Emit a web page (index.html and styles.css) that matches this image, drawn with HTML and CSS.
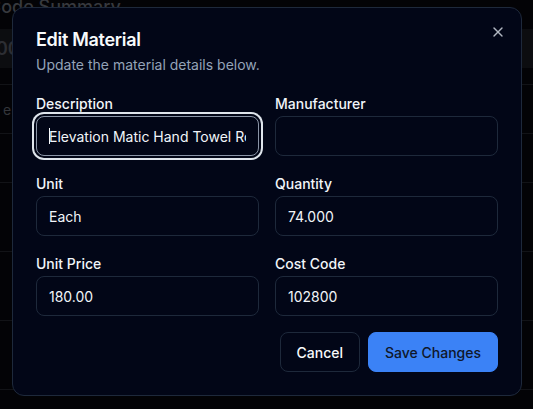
FILE: index.html
```html
<!DOCTYPE html>
<html lang="en">
<head>
<meta charset="utf-8">
<title>Edit Material</title>
<link rel="stylesheet" href="styles.css">
</head>
<body>
  <div class="page">
    <h2 class="page-title">Code Summary</h2>
    <div class="summary-box"><span class="summary-value">00</span></div>
    <div class="table">
      <div class="row row-a"></div>
      <div class="row row-b"><span class="cell-text">e</span></div>
      <div class="row row-b"></div>
      <div class="row row-c"></div>
      <div class="row row-c"></div>
      <div class="row row-c"></div>
    </div>
  </div>

  <div class="dialog" role="dialog">
    <div class="header">
      <h2 class="title">Edit Material</h2>
      <p class="desc">Update the material details below.</p>
    </div>
    <div class="form">
      <div class="field">
        <label class="label">Description</label>
        <div class="input-wrap caret">
          <input class="input focused" type="text" value="Elevation Matic Hand Towel Roll Dispenser">
        </div>
      </div>
      <div class="field">
        <label class="label">Manufacturer</label>
        <div class="input-wrap">
          <input class="input" type="text" value="">
        </div>
      </div>
      <div class="field">
        <label class="label">Unit</label>
        <div class="input-wrap">
          <input class="input" type="text" value="Each">
        </div>
      </div>
      <div class="field">
        <label class="label">Quantity</label>
        <div class="input-wrap">
          <input class="input" type="text" value="74.000">
        </div>
      </div>
      <div class="field">
        <label class="label">Unit Price</label>
        <div class="input-wrap">
          <input class="input" type="text" value="180.00">
        </div>
      </div>
      <div class="field">
        <label class="label">Cost Code</label>
        <div class="input-wrap">
          <input class="input" type="text" value="102800">
        </div>
      </div>
    </div>
    <div class="footer">
      <button class="btn btn-outline" type="button">Cancel</button>
      <button class="btn btn-primary" type="button">Save Changes</button>
    </div>
    <button class="close" type="button" aria-label="Close">
      <svg width="16" height="16" viewBox="0 0 24 24" fill="none" stroke="currentColor" stroke-width="2" stroke-linecap="round" stroke-linejoin="round"><path d="M18 6 6 18"/><path d="m6 6 12 12"/></svg>
    </button>
  </div>
</body>
</html>
```

FILE: styles.css
```css
* { box-sizing: border-box; }

html, body {
  margin: 0;
  padding: 0;
  background: #030306;
  font-family: Inter, "Noto Sans", "Liberation Sans", sans-serif;
  overflow: hidden;
  width: 533px;
  height: 409px;
}

/* dimmed page behind the overlay */
.page {
  width: 533px;
}

.page-title {
  margin: 0 0 0 -12px;
  font-size: 18px;
  line-height: 14px;
  font-weight: 500;
  color: #37393e;
  white-space: nowrap;
}

.summary-box {
  margin-top: 15px;
  height: 39px;
  background: #0c0d10;
  display: flex;
  align-items: center;
}

.summary-value {
  margin-left: -4px;
  font-size: 18px;
  font-weight: 600;
  color: #2c2e33;
}

.table { display: flex; flex-direction: column; }

.row {
  border-bottom: 1px solid #121317;
  display: flex;
  align-items: center;
}
.row-a { height: 17px; }
.row-b { height: 49px; }
.row-c { height: 69px; }

.cell-text {
  padding-left: 3px;
  font-size: 14px;
  color: #34363b;
}

/* dialog */
.dialog {
  position: absolute;
  left: 12px;
  top: 7px;
  width: 510px;
  background: #020617;
  border: 1px solid #1e293b;
  border-radius: 12px;
  padding: 23px;
  display: flex;
  flex-direction: column;
}

.header {
  display: flex;
  flex-direction: column;
  gap: 6px;
}

.title {
  margin: 0;
  font-size: 18px;
  line-height: 18px;
  font-weight: 600;
  letter-spacing: -0.3px;
  color: #f8fafc;
}

.desc {
  margin: 0;
  font-size: 14px;
  line-height: 20px;
  color: #94a3b8;
}

.form {
  margin-top: 22px;
  display: grid;
  grid-template-columns: 1fr 1fr;
  column-gap: 16px;
  row-gap: 21px;
}

.field {
  display: flex;
  flex-direction: column;
}

.label {
  display: block;
  font-size: 14px;
  line-height: 14px;
  font-weight: 500;
  color: #f1f5f9;
  margin-bottom: 5px;
}

.input-wrap { position: relative; }

.input {
  display: block;
  width: 100%;
  height: 40px;
  border: 1px solid #1e293b;
  border-radius: 8px;
  background: #020617;
  padding: 0 12px;
  font-family: Inter, "Noto Sans", "Liberation Sans", sans-serif;
  font-size: 14px;
  color: #f1f5f9;
  outline: none;
}

.input.focused {
  border-color: #8a94a6;
  box-shadow: 0 0 0 2px #020617, 0 0 0 4px #dfe5ec;
}

.caret::after {
  content: "";
  position: absolute;
  left: 13px;
  top: 12px;
  width: 1px;
  height: 16px;
  background: #f8fafc;
}

.footer {
  margin-top: 16px;
  display: flex;
  justify-content: flex-end;
  gap: 8px;
}

.btn {
  height: 40px;
  padding: 0 16px;
  border-radius: 8px;
  font-family: Inter, "Noto Sans", "Liberation Sans", sans-serif;
  font-size: 14px;
  font-weight: 500;
  cursor: pointer;
}

.btn-outline {
  background: #020617;
  border: 1px solid #1e293b;
  color: #f8fafc;
}

.btn-primary {
  background: #3b82f6;
  border: 1px solid #3b82f6;
  color: #0f172a;
}

.close {
  position: absolute;
  right: 15px;
  top: 16px;
  width: 16px;
  height: 16px;
  padding: 0;
  border: 0;
  background: transparent;
  color: #b1b7c2;
  display: flex;
  align-items: center;
  justify-content: center;
}
.close svg { display: block; }
```
